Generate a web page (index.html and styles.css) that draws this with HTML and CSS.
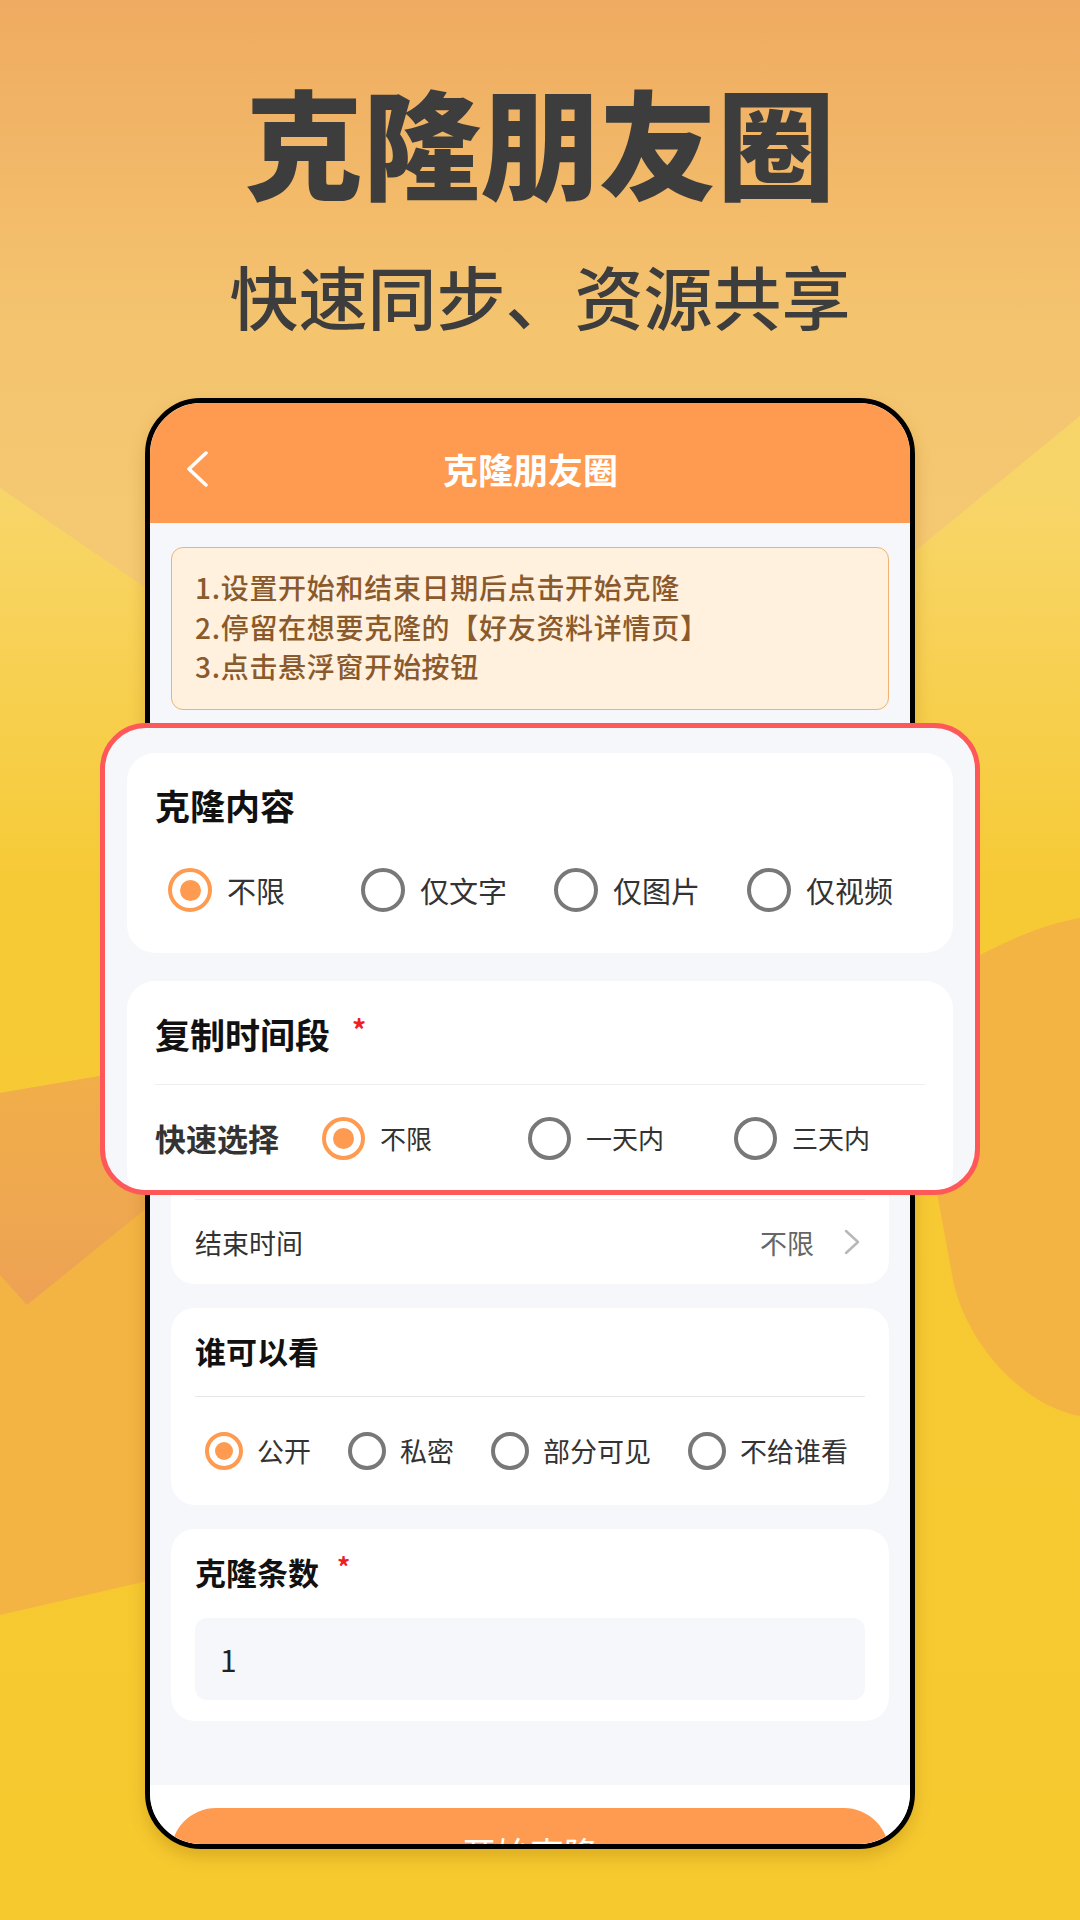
FILE: index.html
```html
<!DOCTYPE html>
<html lang="zh-CN">
<head>
<meta charset="utf-8">
<title>克隆朋友圈</title>
<link rel="stylesheet" href="styles.css">
</head>
<body>
<div class="bg">
  <svg class="bg-art" viewBox="0 0 1080 1920" width="1080" height="1920" xmlns="http://www.w3.org/2000/svg">
    <defs>
      <linearGradient id="gBase" x1="0" y1="0" x2="0" y2="1920" gradientUnits="userSpaceOnUse">
        <stop offset="0" stop-color="#f6d06a"/>
        <stop offset="0.26" stop-color="#f8d568"/>
        <stop offset="0.46" stop-color="#f6ca36"/>
        <stop offset="1" stop-color="#f6c92f"/>
      </linearGradient>
      <linearGradient id="gPeach" x1="0" y1="0" x2="0" y2="860" gradientUnits="userSpaceOnUse">
        <stop offset="0" stop-color="#efab61"/>
        <stop offset="0.38" stop-color="#f4c46f"/>
        <stop offset="1" stop-color="#f6ce76"/>
      </linearGradient>
      <linearGradient id="gDark" x1="0" y1="1040" x2="0" y2="1305" gradientUnits="userSpaceOnUse">
        <stop offset="0" stop-color="#f1b048"/>
        <stop offset="1" stop-color="#eda254"/>
      </linearGradient>
    </defs>
    <rect x="0" y="0" width="1080" height="1920" fill="url(#gBase)"/>
    <polygon points="0,0 1080,0 1080,416 540,858 0,488" fill="url(#gPeach)"/>
    <polygon points="0,1093 300,1042 300,1546 0,1615" fill="#f3b443"/>
    <polygon points="0,1093 300,1042 300,1084 27,1305 0,1275" fill="url(#gDark)"/>
    <path d="M890 1000 C950 975 1010 930 1080 918 L1080 1416 C1020 1405 965 1340 953 1280 L937 1193 C925 1130 905 1060 890 1000 Z" fill="#f3b443"/>
  </svg>
</div>

<main class="page">
  <h1 class="hero-title">克隆朋友圈</h1>
  <p class="hero-sub">快速同步、资源共享</p>

  <section class="phone">
    <header class="phone-header">
      <svg class="back" viewBox="0 0 24 36" width="24" height="36"><polyline points="21,2 4,18 21,34" fill="none" stroke="#fff" stroke-width="3.5" stroke-linecap="round" stroke-linejoin="round"/></svg>
      <div class="phone-title">克隆朋友圈</div>
    </header>

    <div class="content">
      <div class="tips">
        <p>1.设置开始和结束日期后点击开始克隆</p>
        <p>2.停留在想要克隆的【好友资料详情页】</p>
        <p>3.点击悬浮窗开始按钮</p>
      </div>

      <div class="card time-card">
        <div class="time-covered"></div>
        <div class="end-row">
          <span class="end-label">结束时间</span>
          <span class="end-value">不限
            <svg class="chev" viewBox="0 0 18 26" width="18" height="26"><polyline points="3,2 15,13 3,24" fill="none" stroke="#b8b8b8" stroke-width="2.5" stroke-linecap="round" stroke-linejoin="round"/></svg>
          </span>
        </div>
      </div>

      <div class="card who-card">
        <div class="sm-title">谁可以看</div>
        <div class="sep"></div>
        <div class="who-options">
          <label class="opt"><span class="radio sm on"></span><span class="opt-text">公开</span></label>
          <label class="opt"><span class="radio sm"></span><span class="opt-text">私密</span></label>
          <label class="opt"><span class="radio sm"></span><span class="opt-text">部分可见</span></label>
          <label class="opt"><span class="radio sm"></span><span class="opt-text">不给谁看</span></label>
        </div>
      </div>

      <div class="card count-card">
        <div class="sm-title count-title">克隆条数<span class="req">*</span></div>
        <div class="count-input">1</div>
      </div>
    </div>

    <footer class="phone-footer">
      <div class="start-btn">开始克隆</div>
    </footer>
  </section>

  <section class="zoom-pop">
    <div class="pop-card pop-card-1">
      <div class="pop-title">克隆内容</div>
      <div class="pop-options">
        <label class="pop-opt"><span class="radio on"></span><span class="pop-text">不限</span></label>
        <label class="pop-opt"><span class="radio"></span><span class="pop-text">仅文字</span></label>
        <label class="pop-opt"><span class="radio"></span><span class="pop-text">仅图片</span></label>
        <label class="pop-opt"><span class="radio"></span><span class="pop-text">仅视频</span></label>
      </div>
    </div>
    <div class="pop-card pop-card-2">
      <div class="pop-title">复制时间段<span class="req big">*</span></div>
      <div class="pop-sep"></div>
      <div class="quick-row">
        <span class="quick-label">快速选择</span>
        <div class="quick-options">
          <label class="quick-opt"><span class="radio q on"></span><span class="quick-text">不限</span></label>
          <label class="quick-opt"><span class="radio q"></span><span class="quick-text">一天内</span></label>
          <label class="quick-opt"><span class="radio q"></span><span class="quick-text">三天内</span></label>
        </div>
      </div>
    </div>
  </section>
</main>
</body>
</html>
```

FILE: styles.css
```css
* { box-sizing: border-box; }

html, body {
  margin: 0;
  padding: 0;
}

body {
  width: 1080px;
  height: 1920px;
  position: relative;
  overflow: hidden;
  font-family: "Noto Sans CJK SC", "Noto Sans", sans-serif;
  background: #f6c92f;
  color: #333;
}

.bg {
  position: absolute;
  left: 0;
  top: 0;
  width: 1080px;
  height: 1920px;
  z-index: 0;
}

.bg-art { display: block; }

.page {
  position: relative;
  z-index: 1;
  width: 1080px;
  height: 1920px;
  padding-top: 78px;
}

.hero-title {
  margin: 0;
  font-size: 118px;
  line-height: 124px;
  font-weight: 900;
  color: #3d3d3d;
  text-align: center;
}

.hero-sub {
  margin: 53px 0 0;
  font-size: 69px;
  line-height: 80px;
  font-weight: 500;
  color: #3d3d3d;
  text-align: center;
}

/* phone */
.phone {
  margin: 63px 0 0 145px;
  width: 770px;
  height: 1451px;
  border: 5px solid #000;
  border-radius: 56px;
  overflow: hidden;
  background: #f6f7fb;
  display: flex;
  flex-direction: column;
  box-shadow: 0 8px 16px rgba(150, 100, 0, 0.28);
}

.phone-header {
  flex: none;
  height: 120px;
  background: #ff9b50;
  display: flex;
  align-items: center;
  padding: 12px 58px 0 35px;
}

.back { display: block; flex: none; }

.phone-title {
  flex: 1;
  text-align: center;
  color: #fff;
  font-size: 35px;
  font-weight: 700;
  line-height: 48px;
}

.content {
  flex: none;
  height: 1262px;
  padding: 24px 21px 0;
  display: flex;
  flex-direction: column;
  gap: 24px;
}

.tips {
  flex: none;
  height: 163px;
  background: #fff1de;
  border: 1.5px solid #efb272;
  border-radius: 12px;
  padding: 20px 20px 0 23px;
}

.tips p {
  margin: 0;
  font-size: 28px;
  line-height: 39.5px;
  font-weight: 500;
  letter-spacing: 0.7px;
  color: #8a5a2c;
}

.card {
  flex: none;
  background: #fff;
  border-radius: 24px;
  padding: 0 24px;
}

.time-covered { height: 465px; }

.end-row {
  height: 85px;
  border-top: 1px solid #eeeeee;
  display: flex;
  align-items: center;
  justify-content: space-between;
  padding-right: 4px;
}

.end-label {
  font-size: 27px;
  color: #333;
}

.end-value {
  display: flex;
  align-items: center;
  gap: 29px;
  font-size: 27px;
  color: #666;
}

.chev { display: block; }

.sm-title {
  padding-top: 22px;
  font-size: 31px;
  line-height: 42px;
  font-weight: 700;
  color: #111;
}

.sep {
  margin-top: 24px;
  height: 1px;
  background: #e8e8e8;
}

.who-options {
  margin-top: 35px;
  padding: 0 0 35px 10px;
  display: flex;
  align-items: center;
  gap: 37px;
}

.opt {
  display: flex;
  align-items: center;
  gap: 14px;
}

.opt-text {
  font-size: 27px;
  line-height: 38px;
  color: #333;
}

.count-title {
  padding-top: 21px;
  line-height: 44px;
}

.req {
  color: #f01e1e;
  font-size: 26px;
  font-weight: 700;
  line-height: 0;
  margin-left: 18px;
  vertical-align: 8px;
}

.req.big {
  margin-left: 22px;
  font-size: 28px;
}

.count-input {
  margin: 24px 0 21px;
  height: 82px;
  background: #f6f7fb;
  border-radius: 12px;
  padding-left: 25px;
  display: flex;
  align-items: center;
  font-size: 30px;
  color: #222;
}

.phone-footer {
  flex: none;
  height: 120px;
  background: #fff;
  padding: 23px 21px 0;
}

.start-btn {
  height: 90px;
  border-radius: 45px;
  background: #ff9b50;
  color: #fff;
  font-size: 34px;
  line-height: 90px;
  text-align: center;
}

/* radios */
.radio {
  flex: none;
  width: 44px;
  height: 44px;
  border-radius: 50%;
  border: 4.5px solid #787878;
  background: #fff;
  display: flex;
  align-items: center;
  justify-content: center;
}

.radio.on { border-color: #ff9b50; }

.radio.on::after {
  content: "";
  width: 21px;
  height: 21px;
  border-radius: 50%;
  background: #ff9b50;
}

.radio.sm {
  width: 38px;
  height: 38px;
  border-width: 4px;
}

.radio.sm.on::after {
  width: 18px;
  height: 18px;
}

.radio.q {
  width: 43px;
  height: 43px;
}

/* zoom popup overlay */
.zoom-pop {
  position: absolute;
  left: 100px;
  top: 723px;
  width: 880px;
  height: 472px;
  border: 5px solid #ff5858;
  border-radius: 46px;
  background: #f6f7fb;
  overflow: hidden;
  padding: 25px 22px 0;
  display: flex;
  flex-direction: column;
  gap: 28px;
}

.pop-card {
  flex: none;
  background: #fff;
  border-radius: 28px;
  padding: 0 28px;
}

.pop-card-1 { height: 200px; }

.pop-card-2 { padding-bottom: 40px; }

.pop-title {
  padding-top: 27px;
  font-size: 35px;
  line-height: 50px;
  font-weight: 700;
  color: #111;
}

.pop-card-2 .pop-title {
  padding-top: 28.5px;
  line-height: 48px;
}

.pop-options {
  margin-top: 38px;
  padding-left: 13px;
  display: grid;
  grid-template-columns: repeat(4, 193px);
  align-items: center;
}

.pop-opt,
.quick-opt {
  display: flex;
  align-items: center;
  gap: 15px;
}

.pop-text {
  font-size: 29px;
  line-height: 44px;
  color: #333;
}

.pop-sep {
  margin-top: 26px;
  height: 1px;
  background: #eeeeee;
}

.quick-row {
  margin-top: 31.5px;
  display: flex;
  align-items: center;
}

.quick-label {
  flex: none;
  width: 124px;
  font-size: 31px;
  line-height: 44px;
  font-weight: 700;
  color: #333;
}

.quick-options {
  margin-left: 43px;
  display: grid;
  grid-template-columns: repeat(3, 206px);
  align-items: center;
}

.quick-text {
  font-size: 26px;
  line-height: 44px;
  color: #333;
}
```
